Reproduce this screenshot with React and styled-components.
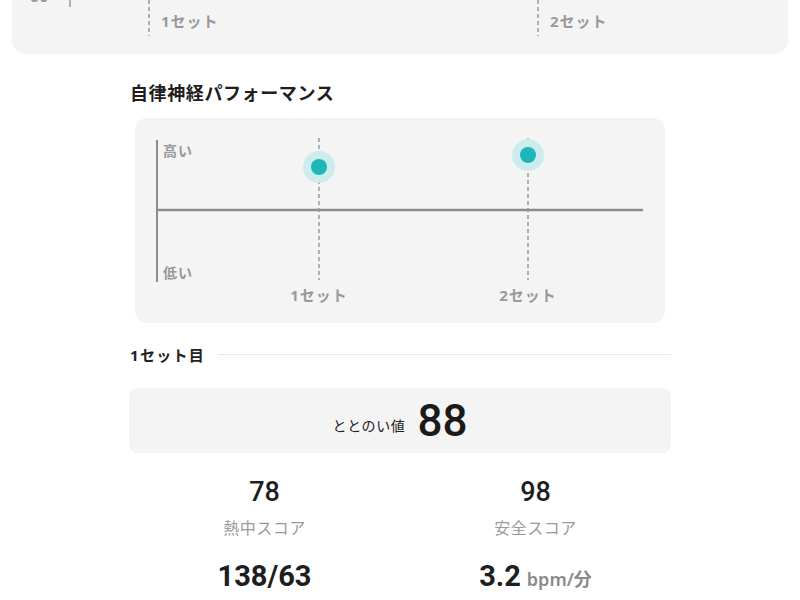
import React from 'react'
import styled, { createGlobalStyle } from 'styled-components'

const GlobalStyle = createGlobalStyle`
    body {
        margin: 0;
        background: #ffffff;
        font-family: "Noto Sans", "Noto Sans CJK JP", sans-serif;
        color: #222222;
    }
`

const Page = styled.div`
    width: 800px;
    height: 600px;
    overflow: hidden;
    display: flex;
    flex-direction: column;
`

const TopCard = styled.div`
    margin: 0 12px;
    height: 54px;
    background: #f5f4f4;
    border-radius: 0 0 14px 14px;
`

const Content = styled.div`
    width: 542px;
    margin: 0 auto;
    display: flex;
    flex-direction: column;
`

const Title = styled.h2`
    margin: 27px 0 0 1px;
    font-size: 18px;
    font-weight: 700;
    letter-spacing: 0.6px;
    line-height: 24px;
    color: #1e1e1e;
`

const ChartCard = styled.div`
    margin: 13px 6px 0;
    height: 205px;
    background: #f5f4f4;
    border-radius: 12px;
`

const SectionHead = styled.div`
    display: flex;
    align-items: center;
    gap: 13px;
    margin-top: 21px;
    height: 20px;
`

const SectionLabel = styled.span`
    font-size: 15px;
    font-weight: 700;
    letter-spacing: 1.3px;
    color: #222;
    padding-left: 1px;
`

const Rule = styled.div`
    flex: 1;
    height: 1px;
    background: #e8e8e8;
`

const ScoreBox = styled.div`
    margin-top: 24px;
    height: 65px;
    background: #f5f4f4;
    border-radius: 8px;
    display: flex;
    align-items: center;
    justify-content: center;
    gap: 12px;
`

const ScoreLabel = styled.span`
    font-size: 14px;
    letter-spacing: 0.6px;
    color: #222;
    margin-top: 8px;
`

const ScoreValue = styled.span`
    font-family: Roboto, "Liberation Sans", sans-serif;
    font-size: 44px;
    font-weight: 500;
    color: #1a1a1a;
    line-height: 1;
`

const Stats = styled.div`
    display: grid;
    grid-template-columns: 1fr 1fr;
    row-gap: 20px;
    margin-top: 22px;
`

const Stat = styled.div`
    display: flex;
    flex-direction: column;
    align-items: center;
`

const StatValue = styled.div`
    font-family: Roboto, "Liberation Sans", sans-serif;
    font-size: ${p => p.$big ? '29px' : '27px'};
    font-weight: ${p => p.$big ? 700 : 500};
    line-height: 34px;
    color: #1e1e1e;
    display: flex;
    align-items: baseline;
    gap: 6px;
`

const Unit = styled.span`
    font-family: "Noto Sans", "Noto Sans CJK JP", sans-serif;
    font-size: 18px;
    font-weight: 600;
    color: #8a8a8a;
`

const StatName = styled.div`
    margin-top: 6px;
    font-size: 16px;
    letter-spacing: 0.5px;
    color: #9a9a9a;
`

const labelStyle = {
    fontFamily: '"Noto Sans", "Noto Sans CJK JP", sans-serif',
    fontWeight: 700,
    letterSpacing: '1px',
}

const TopChart = () => (
    <svg width="776" height="54">
        <rect x="138" y="0" width="500" height="3" fill="#f7f1f1" />
        <text x="18" y="2" fontSize="15" fill="#999" style={labelStyle}>60</text>
        <line x1="58" y1="0" x2="58" y2="7" stroke="#999" strokeWidth="1.5" />
        <line x1="137" y1="0" x2="137" y2="36" stroke="#999" strokeWidth="1.5" strokeDasharray="4 3" />
        <line x1="526" y1="0" x2="526" y2="36" stroke="#999" strokeWidth="1.5" strokeDasharray="4 3" />
        <text x="149" y="27" fontSize="15" fill="#999" style={labelStyle}>1セット</text>
        <text x="538" y="27" fontSize="15" fill="#999" style={labelStyle}>2セット</text>
    </svg>
)

const SETS = [
    { label: '1セット', x: 184, y: 49 },
    { label: '2セット', x: 393, y: 37 },
]

const AutonomicChart = () => (
    <svg width="530" height="205">
        <line x1="22" y1="22" x2="22" y2="164" stroke="#8c8c8c" strokeWidth="2" />
        <line x1="22" y1="92" x2="508" y2="92" stroke="#8c8c8c" strokeWidth="2.5" />
        <text x="28" y="38" fontSize="14" fill="#999" style={labelStyle}>高い</text>
        <text x="28" y="160" fontSize="14" fill="#999" style={labelStyle}>低い</text>
        {SETS.map(s => (
            <g key={s.label}>
                <line x1={s.x} y1="20" x2={s.x} y2="162" stroke="#999" strokeWidth="1.5" strokeDasharray="4 3" />
                <circle cx={s.x} cy={s.y} r="16" fill="#cdeced" />
                <circle cx={s.x} cy={s.y} r="8" fill="#1db6b9" />
                <text x={s.x} y="183" fontSize="15" fill="#999" textAnchor="middle" style={labelStyle}>{s.label}</text>
            </g>
        ))}
    </svg>
)

const App = () => {
    return (
        <Page>
            <GlobalStyle />
            <TopCard>
                <TopChart />
            </TopCard>
            <Content>
                <Title>自律神経パフォーマンス</Title>
                <ChartCard>
                    <AutonomicChart />
                </ChartCard>
                <SectionHead>
                    <SectionLabel>1セット目</SectionLabel>
                    <Rule />
                </SectionHead>
                <ScoreBox>
                    <ScoreLabel>ととのい値</ScoreLabel>
                    <ScoreValue>88</ScoreValue>
                </ScoreBox>
                <Stats>
                    <Stat>
                        <StatValue>78</StatValue>
                        <StatName>熱中スコア</StatName>
                    </Stat>
                    <Stat>
                        <StatValue>98</StatValue>
                        <StatName>安全スコア</StatName>
                    </Stat>
                    <Stat>
                        <StatValue $big>138/63</StatValue>
                    </Stat>
                    <Stat>
                        <StatValue $big>3.2<Unit>bpm/分</Unit></StatValue>
                    </Stat>
                </Stats>
            </Content>
        </Page>
    )
}

export default App
